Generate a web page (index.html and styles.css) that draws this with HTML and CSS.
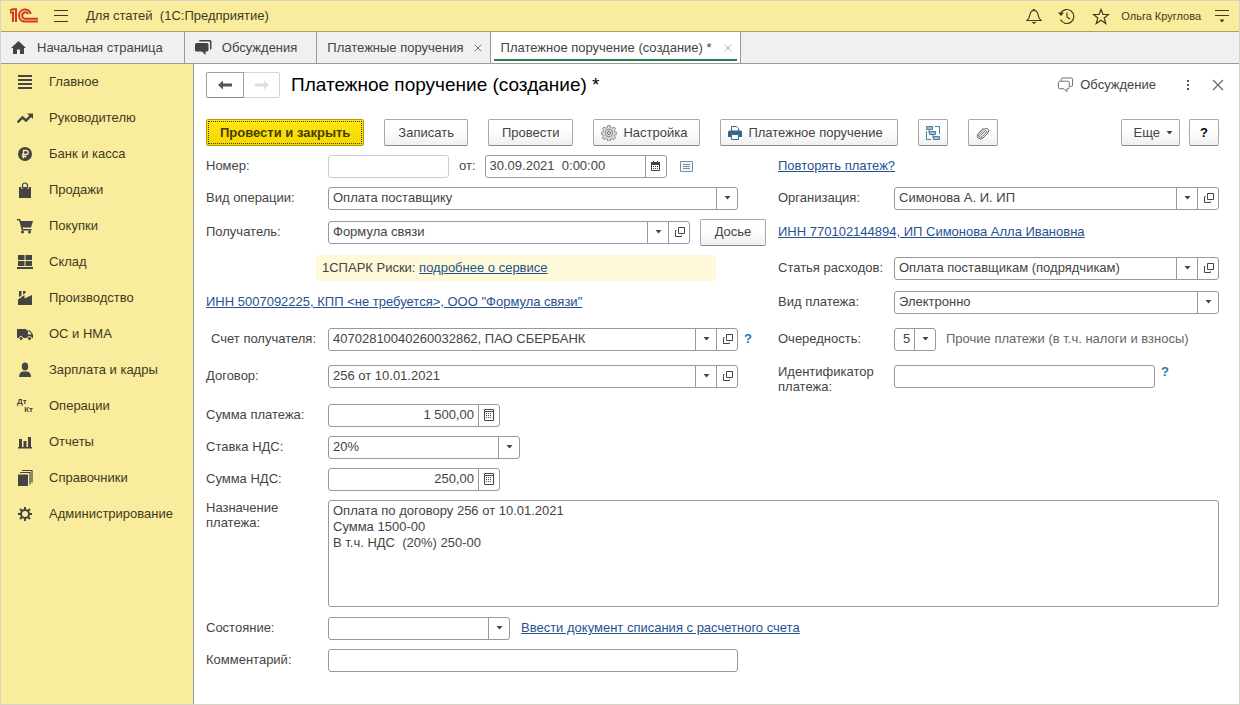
FILE: index.html
```html
<!doctype html>
<html lang="ru">
<head>
<meta charset="UTF-8">
<meta name="viewport" content="width=device-width, initial-scale=1">
<title>Платежное поручение (создание) *</title>
<link rel="stylesheet" href="styles.css">
</head>

<body>
<svg class="sprite" aria-hidden="true">
<symbol id="arrow" viewBox="0 0 7 4"><path d="M0.5 0h6L3.5 3.6z" fill="#444"/></symbol>
<symbol id="open" viewBox="0 0 11 11"><path d="M4.500 0.500h6v6h-6zM2.500 3.500h-1v6h6v-1" fill="none" stroke="#444"/></symbol>
<symbol id="calc" viewBox="0 0 10 12"><path d="M0.5 0.5h9v11h-9z" fill="none" stroke="#444"/><path d="M1 2.5h8" stroke="#444"/><path d="M2 4.5h6M2 6.5h6M2 8.5h6" stroke="#444" stroke-dasharray="1 1"/></symbol>
<symbol id="close" viewBox="0 0 12 12"><path d="M1 1l10 10M11 1L1 11" fill="none" stroke="currentColor" stroke-width="1.2"/></symbol>
<symbol id="chat" viewBox="0 0 18 17"><path d="M4.5 4V2.5Q4.5 1 6 1h9q1.500 0 1.500 1.500v6q0 1.500-1.500 1.500h-1M3 4.500h8.500q1.500 0 1.500 1.500v5q0 1.500-1.500 1.500H10.500v3l-3-3H3q-1.500 0-1.500-1.500V6Q1.500 4.500 3 4.500z" fill="none" stroke="#666"/></symbol>
</svg>

<header class="topbar">
<svg class="logo" width="30" height="16" viewBox="0 0 30 16"><path d="M1 4.500h3V14M1 2.500L4 1.200h3V14M29 13.500H16a6 6 0 1 1 5.800-7.500M29 10.700H16.500a3.200 3.200 0 1 1 2.700-4.700" fill="none" stroke="#d03a26" stroke-width="2"/></svg>
<button class="icon-btn menu" aria-label="Меню"><svg width="14" height="12" viewBox="0 0 14 12"><path d="M0 0.500h14M0 5.500h14M0 11.500h14" stroke="#403a20"/></svg></button>
<span class="app-name">Для статей&nbsp; (1С:Предприятие)</span>
<div class="top-tools">
<button class="icon-btn" aria-label="Уведомления"><svg width="16" height="17" viewBox="0 0 16 17"><path d="M7 2.500a1 1 0 0 1 2 0M1 12.500h14c-2-1.500-2.500-3-3-6C11.500 4 10.500 2.500 8 2.500S4.500 4 4 6.500c-.5 3-1 4.500-3 6z" fill="none" stroke="#403a20" stroke-width="1.200"/><path d="M5.500 14h5L8 16z" fill="#403a20"/></svg></button>
<button class="icon-btn" aria-label="История"><svg width="18" height="17" viewBox="0 0 18 17"><path d="M2.500 5.500a7 7 0 1 1 0 6M9 4.500V9l3 2" fill="none" stroke="#403a20" stroke-width="1.200"/><path d="M0 4.500h6L3 8z" fill="#403a20"/></svg></button>
<button class="icon-btn" aria-label="Избранное"><svg width="18" height="17" viewBox="0 0 18 17"><path d="M9 1.500l2 5h5.500L12.200 10l1.600 5.500L9 12.300l-4.800 3.200L5.800 10 1.500 6.500H7z" fill="none" stroke="#403a20" stroke-width="1.200"/></svg></button>
<span class="user">Ольга Круглова</span>
<button class="icon-btn" aria-label="Сервис"><svg width="14" height="14" viewBox="0 0 14 14"><path d="M0 1.500h14M0 6.500h14" stroke="#403a20"/><path d="M4.500 10.500h5L7 13.500z" fill="#403a20"/></svg></button>
</div>
</header>

<nav class="tabs">
<a class="tab home" href="#"><svg width="15" height="13" viewBox="0 0 15 13"><path d="M7.500 0L0 7h2v6h4V8.500h3V13h4V7h2z" fill="#444"/></svg>Начальная страница</a>
<a class="tab talks" href="#"><svg width="17" height="15" viewBox="0 0 17 15"><path d="M5 0h10q1.500 0 1.500 1.500v7L15 10V2.500Q15 1.500 14 1.500H4Q4 0 5 0z" fill="#444"/><path d="M1.500 3h10.500q1.500 0 1.500 1.500v5.500q0 1.500-1.500 1.500h-1.500V15L7 11.500H1.500Q0 11.500 0 10V4.500Q0 3 1.500 3z" fill="#444"/></svg>Обсуждения</a>
<div class="tab"><a href="#">Платежные поручения</a><button class="icon-btn tab-close" aria-label="Закрыть"><svg width="8" height="8"><use href="#close"/></svg></button></div>
<div class="tab active"><a href="#">Платежное поручение (создание) *</a><button class="icon-btn tab-close" aria-label="Закрыть"><svg width="8" height="8"><use href="#close"/></svg></button></div>
</nav>

<div class="layout">
<nav class="sidebar">
<a href="#"><svg viewBox="0 0 16 16"><path d="M1 2h14M1 6h14M1 10h14M1 14h14" stroke="#444" stroke-width="2"/></svg>Главное</a>
<a href="#"><svg viewBox="0 0 16 16"><path d="M0.500 12.500l5-5 3.500 3 5-5" fill="none" stroke="#444" stroke-width="2.400"/><path d="M10 3.500h6v5.500z" fill="#444"/></svg>Руководителю</a>
<a href="#"><svg viewBox="0 0 16 16"><circle cx="8" cy="8" r="7" fill="#444"/><path d="M6.500 12.500v-8h2.700q2 0 2 2t-2 2H4.800M4.800 10.500h4.700" fill="none" stroke="#f9ec9c" stroke-width="1.300"/></svg>Банк и касса</a>
<a href="#"><svg viewBox="0 0 16 16"><path d="M2 5h2v1.500h2V5h4v1.500h2V5h2v11H2z" fill="#444"/><path d="M5.500 6V3.500a2.500 2.500 0 0 1 5 0V6" fill="none" stroke="#444" stroke-width="1.200"/></svg>Продажи</a>
<a href="#"><svg viewBox="0 0 16 16"><path d="M0 1h3l1 2h12l-2 6.500H5.500L6 11h8.500v1.500H4.800L2.200 2.500H0z" fill="#444"/><circle cx="5.500" cy="14" r="1.500" fill="#444"/><circle cx="12.500" cy="14" r="1.500" fill="#444"/></svg>Покупки</a>
<a href="#"><svg viewBox="0 0 16 16"><path d="M1 1h6.500v5H1zM8.500 1H15v5H8.500zM1 7h6.500v5H1zM8.500 7H15v5H8.500zM0 13h16v2H0z" fill="#444"/></svg>Склад</a>
<a href="#"><svg viewBox="0 0 16 16"><path d="M1 15V9.500L7.500 5v3.500L15 5v10zM2 1h2.500v4.500L2 7zM6 1h2.500v2L6 4.500z" fill="#444"/></svg>Производство</a>
<a href="#"><svg viewBox="0 0 16 16"><path d="M0 3h9.500v1.500H13l3 4V12H0z" fill="#444"/><path d="M11 5.500h1.500l2 3H11z" fill="#f9ec9c"/><circle cx="4" cy="12.500" r="2" fill="#444" stroke="#f9ec9c"/><circle cx="12.500" cy="12.500" r="2" fill="#444" stroke="#f9ec9c"/></svg>ОС и НМА</a>
<a href="#"><svg viewBox="0 0 16 16"><ellipse cx="8" cy="4.500" rx="3.200" ry="4" fill="#444"/><path d="M2 15q0-4.500 3.500-5.500h5Q14 10.500 14 15z" fill="#444"/></svg>Зарплата и кадры</a>
<a href="#"><span class="dtkt"><b>Дт</b><b>Кт</b></span>Операции</a>
<a href="#"><svg viewBox="0 0 16 16"><path d="M2 5h3v8H2zM6.500 7h3v6h-3zM11 3h3v10h-3zM1 13h14v1.500H1z" fill="#444"/></svg>Отчеты</a>
<a href="#"><svg viewBox="0 0 16 16"><path d="M1 4.500h10V16H1z" fill="#444"/><path d="M3 2.500h10v12M5 0.500h10v12" fill="none" stroke="#444" stroke-width="1.200"/></svg>Справочники</a>
<a href="#"><svg viewBox="0 0 16 16"><circle cx="8" cy="8" r="4" fill="none" stroke="#444" stroke-width="2"/><path d="M8 1v3M8 12v3M1 8h3M12 8h3M3 3l2 2M11 11l2 2M3 13l2-2M11 5l2-2" stroke="#444" stroke-width="2"/></svg>Администрирование</a>
</nav>

<main class="content">
<div class="title-row">
<div class="history"><button aria-label="Назад"><svg width="14" height="10" viewBox="0 0 14 10"><path d="M0 5l5-4.500v3h9v3H5v3z" fill="#555"/></svg></button><button aria-label="Вперед" disabled><svg width="14" height="10" viewBox="0 0 14 10"><path d="M14 5L9 0.500v3H0v3h9v3z" fill="#ddd"/></svg></button></div>
<h1>Платежное поручение (создание) *</h1>
<button class="icon-btn discuss"><svg width="17" height="16"><use href="#chat"/></svg>Обсуждение</button>
<button class="icon-btn dots" aria-label="Дополнительно"><svg width="4" height="12" viewBox="0 0 4 12"><path d="M1 1h2v2H1zM1 5h2v2H1zM1 9h2v2H1z" fill="#555"/></svg></button>
<button class="icon-btn form-close" aria-label="Закрыть форму"><svg width="12" height="12"><use href="#close"/></svg></button>
</div>

<div class="toolbar">
<button class="btn primary">Провести и закрыть</button>
<button class="btn">Записать</button>
<button class="btn">Провести</button>
<button class="btn with-icon"><svg width="16" height="16" viewBox="0 0 16 16"><path d="M6.700 0.500h2.600l.4 2 1.500.6 1.700-1.100 1.600 1.700-1 1.700.6 1.500 2 .4v2l-2 .4-.6 1.500 1 1.700-1.600 1.700-1.700-1.100-1.500.6-.4 2H6.700l-.4-2-1.500-.6-1.700 1.100L1.500 12.900l1-1.700-.6-1.500-1.500-.4v-2l1.500-.4.6-1.500-1-1.700L3.100 2l1.700 1.100 1.500-.6z" fill="#d8dadb" stroke="#8a8d90"/><circle cx="8" cy="8" r="3.800" fill="none" stroke="#8a8d90"/><circle cx="8" cy="8" r="1.500" fill="#fff" stroke="#666"/></svg>Настройка</button>
<button class="btn with-icon print"><svg width="14" height="14" viewBox="0 0 14 14"><path d="M3.500 5V0.500h5l2 2V5" fill="#fff" stroke="#44657f"/><path d="M1.500 4.500h11Q14 4.500 14 6v5h-3V8.500H3V11H0V6q0-1.500 1.500-1.500z" fill="#36648b"/><path d="M3.500 8.500h7v5h-7z" fill="#fff" stroke="#44657f"/></svg>Платежное поручение</button>
<button class="btn square" aria-label="Структура подчиненности"><svg width="16" height="16" viewBox="0 0 16 16"><path d="M4 5v3h1M8 10v3h1M10 1.500h4.500V9M1.500 6v8.500H6" fill="none" stroke="#4f8199"/><path d="M1.500 1.500h6v3h-6zM4.500 6.500h6v3h-6zM8.500 11.500h6v3h-6z" fill="#9fc5dc" stroke="#4f7f9e"/></svg></button>
<button class="btn square" aria-label="Присоединенные файлы"><svg width="14" height="14" viewBox="0 0 14 14"><path d="M4.500 9.500L9 5q1-.8 1.500 0t-.3 1.500L6 10.700q-1.600 1.300-2.700.2t0-2.700L8 3.500q2.300-2 4-.4t-.2 3.900L7 12q-2.700 2-4.700.2T2 7.800L7.500 2" fill="none" stroke="#666"/></svg></button>
<button class="btn more">Еще<svg width="7" height="4"><use href="#arrow"/></svg></button>
<button class="btn square help-btn">?</button>
</div>

<form class="form" onsubmit="return false">
<div class="row">
<div class="left"><label class="cap" for="number">Номер:</label><span class="field num off"><input id="number" type="text" readonly></span><label class="from" for="date">от:</label><span class="field date"><input id="date" type="text" value="30.09.2021  0:00:00"><button aria-label="Выбрать дату"><svg width="9" height="10" viewBox="0 0 9 10"><path d="M0.500 1.500h8v8h-8z" fill="#fff" stroke="#444"/><path d="M0 1h9v3H0z" fill="#444"/><path d="M2 5.500h5M2 7.500h5" stroke="#444" stroke-dasharray="1 1"/><path d="M2.500 0v2M6.500 0v2" stroke="#444"/></svg></button></span><svg class="list-icon" width="13" height="11" viewBox="0 0 13 11"><path d="M0.500 0.500h12v10H0.500z" fill="#f3f6f9" stroke="#7e91a3"/><path d="M3 3.500h7M3 5.500h7M3 7.500h7" stroke="#7e91a3"/></svg></div>
<div class="right"><a href="#">Повторять платеж?</a></div>
</div>

<div class="row">
<div class="left"><label class="cap" for="kind">Вид операции:</label><span class="field wide"><select id="kind"><option>Оплата поставщику</option></select><i class="arrow"><svg width="7" height="4"><use href="#arrow"/></svg></i></span></div>
<div class="right"><label class="cap" for="org">Организация:</label><span class="field grow"><select id="org"><option>Симонова А. И. ИП</option></select><i class="arrow"><svg width="7" height="4"><use href="#arrow"/></svg></i><button aria-label="Открыть"><svg width="11" height="11"><use href="#open"/></svg></button></span></div>
</div>

<div class="row mid">
<div class="left"><label class="cap" for="payee">Получатель:</label><span class="field grow"><select id="payee"><option>Формула связи</option></select><i class="arrow"><svg width="7" height="4"><use href="#arrow"/></svg></i><button aria-label="Открыть"><svg width="11" height="11"><use href="#open"/></svg></button></span><button class="btn dossier">Досье</button></div>
<div class="right"><a href="#">ИНН 770102144894, ИП Симонова Алла Ивановна</a></div>
</div>

<div class="row mid">
<div class="left"><p class="spark">1СПАРК Риски: <a href="#">подробнее о сервисе</a></p></div>
<div class="right"><label class="cap" for="item">Статья расходов:</label><span class="field grow"><select id="item"><option>Оплата поставщикам (подрядчикам)</option></select><i class="arrow"><svg width="7" height="4"><use href="#arrow"/></svg></i><button aria-label="Открыть"><svg width="11" height="11"><use href="#open"/></svg></button></span></div>
</div>

<div class="row">
<div class="left"><a href="#">ИНН 5007092225, КПП &lt;не требуется&gt;, ООО "Формула связи"</a></div>
<div class="right"><label class="cap" for="paytype">Вид платежа:</label><span class="field grow"><select id="paytype"><option>Электронно</option></select><i class="arrow"><svg width="7" height="4"><use href="#arrow"/></svg></i></span></div>
</div>

<div class="row tall">
<div class="left"><label class="cap indent" for="account">Счет получателя:</label><span class="field wide"><select id="account"><option>40702810040260032862, ПАО СБЕРБАНК</option></select><i class="arrow"><svg width="7" height="4"><use href="#arrow"/></svg></i><button aria-label="Открыть"><svg width="11" height="11"><use href="#open"/></svg></button></span><a class="hint" href="#">?</a></div>
<div class="right"><label class="cap" for="priority">Очередность:</label><span class="field priority"><select id="priority"><option>5</option></select><i class="arrow"><svg width="7" height="4"><use href="#arrow"/></svg></i></span><span class="note">Прочие платежи (в т.ч. налоги и взносы)</span></div>
</div>

<div class="row">
<div class="left"><label class="cap" for="contract">Договор:</label><span class="field wide"><select id="contract"><option>256 от 10.01.2021</option></select><i class="arrow"><svg width="7" height="4"><use href="#arrow"/></svg></i><button aria-label="Открыть"><svg width="11" height="11"><use href="#open"/></svg></button></span></div>
<div class="right payid-cell"><label class="cap two-line" for="payid">Идентификатор платежа:</label><span class="field payid"><input id="payid" type="text"></span><a class="hint up" href="#">?</a></div>
</div>

<div class="sums">
<div class="line"><label class="cap" for="sum">Сумма платежа:</label><span class="field sum"><input id="sum" type="text" value="1 500,00"><button aria-label="Калькулятор"><svg width="10" height="12"><use href="#calc"/></svg></button></span></div>
<div class="line"><label class="cap" for="rate">Ставка НДС:</label><span class="field rate"><select id="rate"><option>20%</option></select><i class="arrow"><svg width="7" height="4"><use href="#arrow"/></svg></i></span></div>
<div class="line"><label class="cap" for="vat">Сумма НДС:</label><span class="field sum"><input id="vat" type="text" value="250,00"><button aria-label="Калькулятор"><svg width="10" height="12"><use href="#calc"/></svg></button></span></div>
</div>

<div class="line purpose"><label class="cap two-line" for="purpose">Назначение платежа:</label><textarea id="purpose">Оплата по договору 256 от 10.01.2021
Сумма 1500-00
В т.ч. НДС  (20%) 250-00</textarea></div>

<div class="line"><label class="cap" for="state">Состояние:</label><span class="field state"><select id="state"><option></option></select><i class="arrow"><svg width="7" height="4"><use href="#arrow"/></svg></i></span><a class="writeoff" href="#">Ввести документ списания с расчетного счета</a></div>
<div class="line"><label class="cap" for="comment">Комментарий:</label><span class="field wide"><input id="comment" type="text"></span></div>
</form>
</main>
</div>
</body>
</html>
```

FILE: styles.css
```css
*{box-sizing:border-box;}
body{margin:0; min-height:100vh; display:flex; flex-direction:column; border:1px solid #d5d2c6; background:#fff; font-family:"Liberation Sans", Arial, sans-serif; font-size:13px; line-height:16px; color:#444;}
button, input, select, textarea{font:inherit; color:inherit; margin:0;}
a{color:#27528f;}
svg{flex:none; display:block;}
.sprite{position:absolute; width:0; height:0;}
.icon-btn{display:flex; align-items:center; padding:0; border:0; background:none;}

/* top bar */
.topbar{display:flex; align-items:center; height:31px; padding:0 10px 0 8px; background:#f9ec9c; border-bottom:1px solid #b0a265; color:#403a20;}
.menu{margin:0 18px 0 15px;}
.top-tools{display:flex; align-items:center; gap:16px; margin-left:auto;}
.user{font-size:11px; margin:0 -2px 0 -5px;}

/* tabs */
.tabs{display:flex; height:32px; background:#f0f0f0; border-bottom:1px solid #999;}
.tab{display:flex; align-items:center; padding:0 8px 0 10px; border-right:1px solid #999; color:#444; text-decoration:none; white-space:nowrap;}
.tab a{color:inherit; text-decoration:none;}
.home{gap:11px; padding-right:21px;}
.talks{gap:10px; padding-right:19px;}
.tab-close{margin-left:10px; color:#555;}
.active{background:#fff; position:relative;}
.active .tab-close{margin-left:12px; color:#999;}
.active:after{content:""; position:absolute; left:3px; right:3px; bottom:2px; height:2px; background:#21834f;}

/* sections panel */
.layout{display:flex; flex:1;}
.sidebar{flex:none; width:193px; background:#f9ec9c; border-right:1px solid #999;}
.sidebar a{display:flex; align-items:center; gap:16px; height:36px; padding-left:16px; color:#403a20; text-decoration:none;}
.sidebar svg{width:16px; height:16px;}
.dtkt{width:16px; font-size:8px; line-height:8px; color:#444;}
.dtkt b{display:block;}
.dtkt b + b{text-align:right;}

/* form header */
.content{flex:1; min-width:0; padding:4px 20px 20px 12px;}
.title-row{display:flex; align-items:center; height:34px; margin-right:-5px;}
.history{display:flex;}
.history button{display:flex; align-items:center; justify-content:center; width:38px; height:26px; padding:0; border:1px solid #a0a0a0; border-bottom-color:#888; border-radius:2px 0 0 2px; background:#fff;}
.history button + button{width:36px; border-color:#d5d5d5; border-left:0; border-radius:0 2px 2px 0;}
h1{flex:1; margin:0 0 0 11px; font-size:19px; line-height:24px; font-weight:normal; color:#000;}
.discuss{gap:6px; color:#444;}
.dots{margin:0 22px 0 30px;}
.form-close{color:#666;}

.toolbar{display:flex; gap:20px; padding:17px 0 4px;}
.btn{display:flex; align-items:center; justify-content:center; flex:none; height:27px; padding:0 13px; border:1px solid #a8a8a8; border-bottom-color:#888; border-radius:2px; background:linear-gradient(#fff 40%, #efefef); color:#444; white-space:nowrap;}
.primary{padding:0 13px; border-color:#b39a10; background:linear-gradient(#ffe613, #f5d800); font-weight:bold; color:#463c00; outline:1px dotted #463c00; outline-offset:-3px;}
.with-icon{gap:6px; padding:0 12px 0 7px;}
.print{padding-right:14px;}
.square{width:30px; padding:0;}
.more{gap:6px; margin-left:auto; padding:0 6px 0 12px;}
.help-btn{margin-left:-11px; font-weight:bold; color:#000;}

/* fields */
.row{display:grid; grid-template-columns:560px 1fr; grid-template-rows:100%; column-gap:12px; height:32px;}
.mid{height:36px;}
.tall{height:42px;}
.left, .right, .line{display:flex; align-items:center;}
.line{height:32px;}
.cap{flex:none; width:122px;}
.right .cap{width:116px;}
.indent{padding-left:5px;}
.two-line{line-height:15px; padding-right:10px;}
.field{display:flex; height:23px; border:1px solid #999; border-radius:3px; background:#fff;}
.field input, .field select{flex:1; min-width:0; width:100%; padding:0 4px; border:0; outline:0; background:transparent; appearance:none; text-overflow:ellipsis;}
.field button, .arrow{display:flex; align-items:center; justify-content:center; flex:none; width:21px; padding:0; border:0; border-left:1px solid #999; background:none;}
.arrow{margin-left:-21px; pointer-events:none;}
.field input{white-space:pre;}
.off{border-color:#ccc;}
.num{width:121px;}
.from{margin:0 9px 0 10px;}
.date{width:182px;}
.list-icon{margin-left:13px;}
.wide{width:410px;}
.grow{flex:1;}
.priority{width:42px;}
.field.priority select{padding-left:8px;}
.payid{width:261px;}
.sum{width:172px;}
.sum input{text-align:right;}
.rate{width:192px;}
.state{width:182px;}
.note{margin-left:10px; color:#666; white-space:nowrap;}
.hint{margin-left:6px; font-weight:bold; color:#1c7ab5; text-decoration:none;}
.payid-cell .cap{padding-top:6px;}
.up{align-self:flex-start; margin-top:4px;}
.dossier{width:66px; margin-left:10px;}
.spark{width:400px; margin:0 0 0 110px; padding:5px 6px; background:#fdf9d9;}
.sums{margin-top:7px;}
.purpose{height:auto; align-items:flex-start; margin:5px 0;}
textarea{flex:1; height:107px; padding:2px 4px; border:1px solid #999; border-radius:3px; background:#fff; outline:0; resize:none;}
.writeoff{margin-left:11px;}
```
